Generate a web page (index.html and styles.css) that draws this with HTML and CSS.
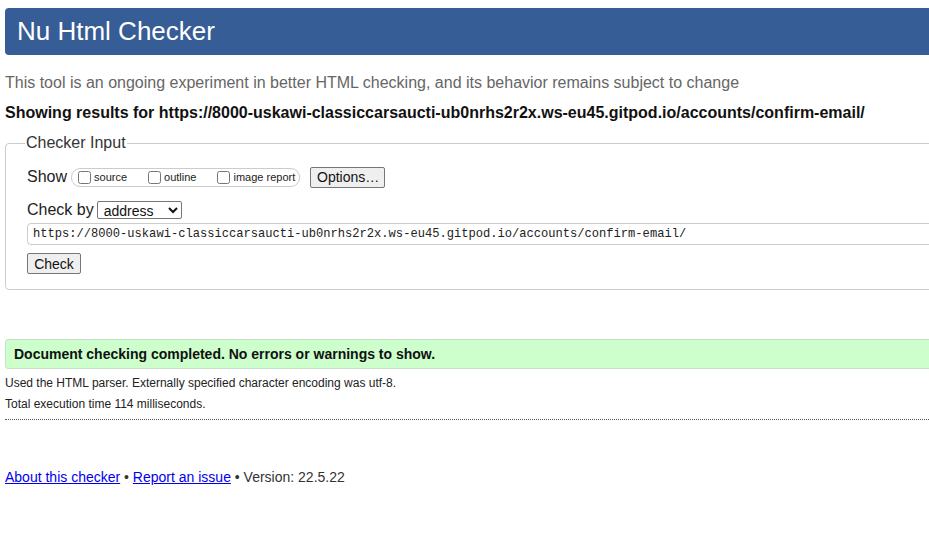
FILE: index.html
```html
<!DOCTYPE html>
<html>
<head>
<meta charset="utf-8">
<title>Nu Html Checker</title>
<link rel="stylesheet" href="styles.css">
</head>
<body>
<div class="page">
  <h1 class="banner">Nu Html Checker</h1>
  <p class="intro">This tool is an ongoing experiment in better HTML checking, and its behavior remains subject to change</p>
  <p class="showing">Showing results for https://8000-uskawi-classiccarsaucti-ub0nrhs2r2x.ws-eu45.gitpod.io/accounts/confirm-email/</p>
  <fieldset class="checker">
    <legend>Checker Input</legend>
    <div class="row show-row">
      <span class="lbl">Show</span>
      <span class="group">
        <label class="opt"><input type="checkbox"><span>source</span></label>
        <label class="opt"><input type="checkbox"><span>outline</span></label>
        <label class="opt"><input type="checkbox"><span>image report</span></label>
      </span>
      <button class="btn options">Options…</button>
    </div>
    <div class="row by-row">
      <span class="lbl">Check by</span>
      <select class="sel"><option>address</option></select>
    </div>
    <input class="url" type="text" value="https://8000-uskawi-classiccarsaucti-ub0nrhs2r2x.ws-eu45.gitpod.io/accounts/confirm-email/">
    <div class="row"><button class="btn check">Check</button></div>
  </fieldset>
  <p class="success">Document checking completed. No errors or warnings to show.</p>
  <p class="details">Used the HTML parser. Externally specified character encoding was utf-8.</p>
  <p class="details">Total execution time 114 milliseconds.</p>
  <hr class="dots">
  <p class="footer"><a href="#">About this checker</a> • <a href="#">Report an issue</a> • Version: 22.5.22</p>
</div>
</body>
</html>
```
FILE: styles.css
```css
html, body {
  margin: 0;
  padding: 0;
  overflow: hidden;
  background: #fff;
}
body {
  font-family: "Liberation Sans", Arial, sans-serif;
  color: #222;
}
.page {
  width: 1100px;
  padding: 8px 0 0 5px;
}
.banner {
  margin: 0;
  background: #365d95;
  color: #fff;
  font-weight: normal;
  font-size: 26px;
  height: 47px;
  line-height: 47px;
  padding-left: 12px;
  border-radius: 4px;
}
.intro {
  margin: 18px 0 0;
  font-size: 16px;
  line-height: 20px;
  color: #666;
}
.showing {
  margin: 10px 0 0;
  font-size: 16px;
  font-weight: bold;
  line-height: 20px;
  color: #111;
}
.checker {
  margin: 11px 0 0;
  border: 1px solid #ccc;
  border-radius: 4px;
  padding: 14px 0 15px 21px;
  min-width: 0;
}
.checker legend {
  font-size: 16px;
  color: #333;
  padding: 0 1px;
  margin-left: -2px;
}
.row {
  display: flex;
  align-items: center;
}
.lbl {
  font-size: 16px;
  color: #222;
}
.show-row {
  height: 22px;
}
.group {
  display: flex;
  align-items: center;
  margin-left: 4px;
  border: 1px solid #ccc;
  border-radius: 9px;
  height: 19px;
  padding: 0 0 0 6px;
  width: 229px;
  box-sizing: border-box;
}
.opt {
  display: flex;
  align-items: center;
  font-size: 11px;
  margin-right: 21px;
}
.opt:last-child {
  margin-right: 0;
}
.opt input {
  margin: 0 3px 0 0;
  width: 13px;
  height: 13px;
}
.btn {
  font-family: "Liberation Sans", Arial, sans-serif;
  font-size: 14px;
  background: #efefef;
  border: 1px solid #767676;
  border-radius: 2px;
  color: #111;
  padding: 0 6px;
  height: 21px;
}
.options {
  margin-left: 10px;
  width: 75px;
}
.by-row {
  margin-top: 12px;
  height: 20px;
}
.sel {
  margin-left: 3px;
  font-family: "Liberation Sans", Arial, sans-serif;
  font-size: 14px;
  width: 85px;
  height: 18px;
  border: 1px solid #767676;
  border-radius: 2px;
  background: #fff;
  color: #111;
  padding: 0 2px;
}
.url {
  display: block;
  margin: 3px 0 0;
  width: 1100px;
  height: 22px;
  box-sizing: border-box;
  border: 1px solid #ccc;
  border-radius: 4px;
  padding: 0 5px;
  font-family: "Liberation Mono", "DejaVu Sans Mono", monospace;
  font-size: 12.1px;
  color: #222;
}
.check {
  margin-top: 8px;
  width: 54px;
}
.success {
  margin: 49px 0 0;
  background: #ccffcc;
  border: 1px solid #c9dfc9;
  border-radius: 3px;
  font-size: 14px;
  font-weight: bold;
  color: #111;
  height: 28px;
  line-height: 28px;
  padding-left: 8px;
}
.details {
  margin: 7px 0 0;
  font-size: 12px;
  line-height: 14px;
  color: #222;
}
.details + .details {
  margin-top: 7px;
}
.dots {
  margin: 8px 0 0;
  border: 0;
  border-top: 1px dotted #555;
  height: 0;
}
.footer {
  margin: 49px 0 0;
  font-size: 14px;
  color: #333;
}
.footer a {
  color: #0000ee;
}
```
